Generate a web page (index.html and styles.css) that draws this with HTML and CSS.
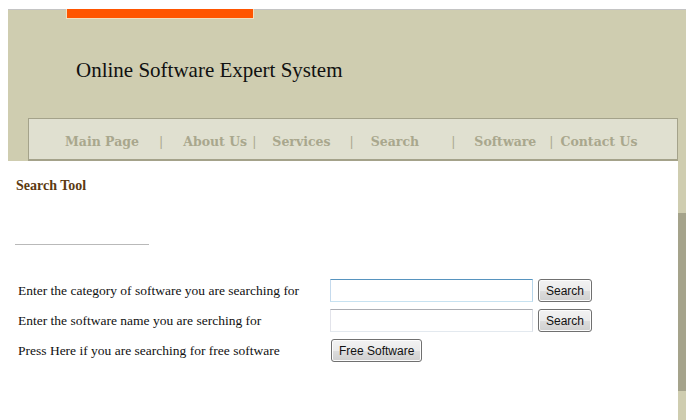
FILE: index.html
```html
<!DOCTYPE html>
<html>
<head>
<meta charset="utf-8">
<title>Online Software Expert System</title>
<link rel="stylesheet" href="styles.css">
</head>
<body>
<div class="site">
  <header class="masthead">
    <div class="accent"></div>
    <h1 class="brand">Online Software Expert System</h1>
    <nav class="menu">
      <a class="item item-main" href="#">Main Page</a>
      <span class="sep sep-1">|</span>
      <a class="item" href="#">About Us</a>
      <span class="sep sep-2">|</span>
      <a class="item" href="#">Services</a>
      <span class="sep sep-3">|</span>
      <a class="item" href="#">Search</a>
      <span class="sep sep-4">|</span>
      <a class="item" href="#">Software</a>
      <span class="sep sep-5">|</span>
      <a class="item" href="#">Contact Us</a>
    </nav>
  </header>
  <div class="body-row">
    <main class="content">
      <h2 class="tool-title">Search Tool</h2>
      <hr class="rule">
      <form class="search-form">
        <label class="field-label" for="cat">Enter the category of software you are searching for</label>
        <input class="field field-active" id="cat" type="text">
        <button class="btn" type="button">Search</button>

        <label class="field-label" for="name">Enter the software name you are serching for</label>
        <input class="field" id="name" type="text">
        <button class="btn" type="button">Search</button>

        <span class="field-label">Press Here if you are searching for free software</span>
        <button class="btn btn-free" type="button">Free Software</button>
      </form>
    </main>
    <aside class="side">
      <div class="side-bar"></div>
    </aside>
  </div>
</div>
</body>
</html>
```
FILE: styles.css
```css
html, body {
  margin: 0;
  padding: 0;
  background: #ffffff;
}

.site {
  padding-top: 9px;
}

.masthead {
  margin-left: 8px;
  height: 152px;
  background: #cfcdb0;
  border-top: 1px solid #c4c4c4;
  box-sizing: border-box;
  display: flex;
  flex-direction: column;
}

.accent {
  margin-left: 58px;
  width: 186px;
  height: 9px;
  background: #ff5500;
  border: 1px solid #f2dfbf;
  border-top: 0;
  margin-top: -1px;
}

.brand {
  margin: 38px 0 0 68px;
  font-family: "Liberation Serif", serif;
  font-weight: normal;
  font-size: 21px;
  line-height: 26px;
  color: #111111;
}

.menu {
  margin: auto 0 0 20px;
  width: 650px;
  height: 43px;
  box-sizing: border-box;
  background: #e0e0d0;
  border: 1px solid #a4a28a;
  border-bottom-width: 2px;
  display: flex;
  align-items: center;
  padding: 4px 0 0 36px;
  font-family: "DejaVu Serif", serif;
  font-weight: bold;
  font-size: 12.5px;
  color: #a9a78d;
}

.item {
  color: inherit;
  text-decoration: none;
  white-space: nowrap;
}

.sep {
  font-weight: normal;
}

.sep-1 { margin: 0 20px 0 20px; }
.sep-2 { margin: 0 16px 0 5px; }
.sep-3 { margin: 0 17px 0 19px; }
.sep-4 { margin: 0 19px 0 32px; }
.sep-5 { margin: 0 7px 0 13px; }

.body-row {
  display: flex;
  min-height: 259px;
}

.content {
  flex: 1;
  padding: 16px 0 40px 16px;
  font-family: "Liberation Serif", serif;
}

.side {
  width: 8px;
  background: #cfcdb0;
}

.side-bar {
  margin-top: 52px;
  height: 178px;
  background: #a5a38b;
}

.tool-title {
  margin: 0;
  font-size: 14px;
  line-height: 18px;
  font-weight: bold;
  color: #5c3a12;
}

.rule {
  margin: 49px 0 0 -1px;
  width: 134px;
  border: 0;
  border-top: 1px solid #b9b9b9;
  height: 0;
}

.search-form {
  margin: 34px 0 0 2px;
  display: grid;
  grid-template-columns: 307px 203px auto;
  column-gap: 5px;
  row-gap: 7px;
  align-items: center;
  justify-items: start;
}

.field-label {
  font-size: 13.5px;
  color: #111111;
  grid-column: 1;
}

.field {
  width: 203px;
  height: 23px;
  box-sizing: border-box;
  margin: 0;
  padding: 2px 4px;
  border: 1px solid;
  border-color: #abadb3 #dbdfe6 #e3e9ef #e2e3ea;
  background: #ffffff;
  outline: none;
}

.field-active {
  border-color: #5794bf #b7d5ea #c7e2f1 #c5daed;
}

.btn {
  height: 23px;
  margin: 0;
  padding: 0 7px;
  font-family: "Liberation Sans", Arial, sans-serif;
  font-size: 12px;
  color: #111111;
  border: 1px solid #707070;
  border-radius: 3px;
  background: linear-gradient(#f2f2f2 0%, #ebebeb 50%, #dddddd 51%, #cfcfcf 100%);
  box-shadow: inset 0 0 0 1px #fcfcfc;
}

.btn-free {
  grid-column: 2 / 4;
  margin-left: 1px;
  padding: 0 7px;
}
```
